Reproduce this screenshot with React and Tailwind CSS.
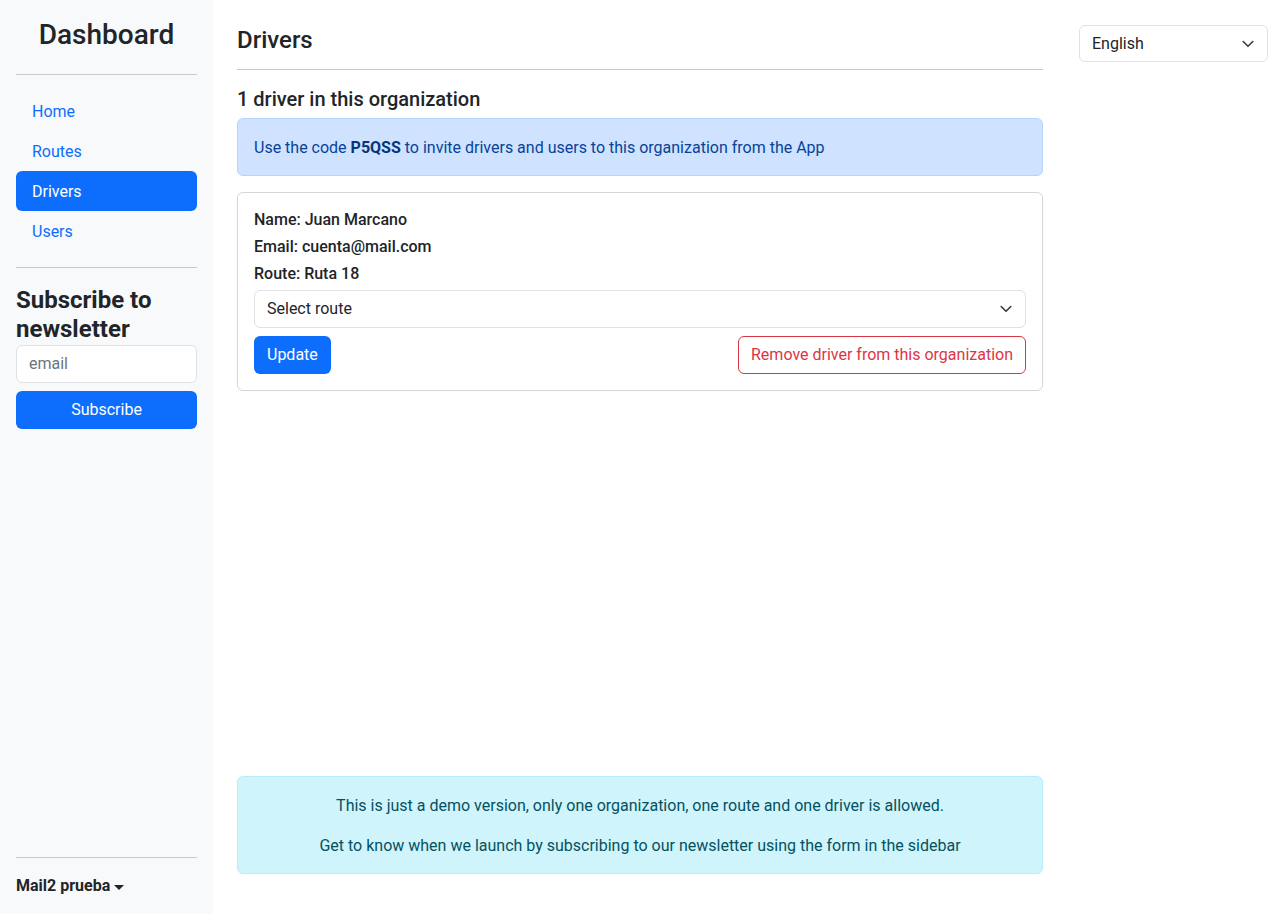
import React from "react";

const Chevron = () => (
  <svg width="12" height="8" viewBox="0 0 12 8" fill="none" className="shrink-0 mr-px">
    <path d="M1.2 1.5l4.8 4.8 4.8-4.8" stroke="#343a40" strokeWidth="1.6" strokeLinecap="round" strokeLinejoin="round" />
  </svg>
);

const Hr = ({ className = "" }) => <div className={"h-px bg-[#c8c9ca] " + className} />;

export default function App() {
  const font = { fontFamily: "Roboto, 'Liberation Sans', sans-serif" };
  return (
    <div className="flex h-screen w-full bg-white text-[#212529] text-base leading-6 overflow-hidden" style={font}>
      {/* Sidebar */}
      <aside className="w-[213px] shrink-0 h-full bg-[#f8f9fa] flex flex-col px-4 pt-[18px] pb-4">
        <h3 className="text-[28px] leading-[34px] font-medium text-center mb-[6px]">Dashboard</h3>
        <Hr className="my-4" />
        <nav className="flex flex-col">
          <a className="px-4 pt-[9px] pb-[7px] text-[#0d6efd] rounded-[6px]">Home</a>
          <a className="px-4 pt-[9px] pb-[7px] text-[#0d6efd] rounded-[6px]">Routes</a>
          <a className="px-4 pt-[9px] pb-[7px] text-white bg-[#0d6efd] rounded-[6px]">Drivers</a>
          <a className="px-4 pt-[9px] pb-[7px] text-[#0d6efd] rounded-[6px]">Users</a>
        </nav>
        <Hr className="my-4" />
        <h4 className="text-[24px] leading-[28.8px] font-bold pt-[2px] mb-[1px]">Subscribe to newsletter</h4>
        <div className="h-[38px] bg-white border border-[#dee2e6] rounded-[6px] px-3 flex items-center text-[#6c757d]">email</div>
        <button className="mt-2 h-[38px] w-full bg-[#0d6efd] text-white rounded-[6px]">Subscribe</button>
        <div className="mt-auto">
          <Hr className="mb-[15px]" />
          <div className="flex items-center font-bold pt-px">
            Mail2 prueba
            <span className="ml-[4px] mt-[2px] w-0 h-0 border-t-[5px] border-t-[#212529] border-x-[5px] border-x-transparent" />
          </div>
        </div>
      </aside>

      {/* Main */}
      <main className="flex-1 flex pl-6 pr-3">
        <div className="w-[806px] shrink-0 flex flex-col pt-[26px] pb-10">
          <h4 className="text-[24px] leading-[28.8px] font-medium">Drivers</h4>
          <Hr className="mt-[14px] mb-4" />
          <h5 className="text-[20px] leading-6 font-medium mt-px mb-[7px]">1 driver in this organization</h5>
          <div className="bg-[#cfe2ff] border border-[#b6d4fe] text-[#084298] rounded-[6px] px-4 pt-[17px] pb-[15px] mb-4">
            Use the code <span className="font-bold text-[#06357a]">P5QSS</span> to invite drivers and users to this organization from the App
          </div>
          <div className="border border-[#d5d5d5] rounded-[6px] p-4">
            <div className="leading-[22px] font-medium mb-[5px]">Name: Juan Marcano</div>
            <div className="leading-[22px] font-medium mb-[5px]">Email: cuenta@mail.com</div>
            <div className="leading-[22px] font-medium mb-[5px]">Route: Ruta 18</div>
            <div className="h-[38px] border border-[#dee2e6] rounded-[6px] pl-3 pr-3 flex items-center justify-between">
              <span className="pt-px">Select route</span>
              <Chevron />
            </div>
            <div className="mt-2 flex justify-between">
              <button className="h-[38px] px-[13px] pt-px bg-[#0d6efd] text-white rounded-[6px]">Update</button>
              <button className="h-[38px] px-3 pt-px border border-[#dc3545] text-[#dc3545] rounded-[6px]">Remove driver from this organization</button>
            </div>
          </div>
          <div className="mt-auto bg-[#cff4fc] border border-[#b6effb] text-[#055160] rounded-[6px] px-4 pt-[17px] pb-[15px] text-center">
            <p className="mb-4">This is just a demo version, only one organization, one route and one driver is allowed.</p>
            <p>Get to know when we launch by subscribing to our newsletter using the form in the sidebar</p>
          </div>
        </div>
        <div className="ml-9 flex-1 pt-[25px]">
          <div className="h-[37px] border border-[#dee2e6] rounded-[6px] px-3 flex items-center justify-between">
            <span className="pt-px">English</span>
            <Chevron />
          </div>
        </div>
      </main>
    </div>
  );
}
